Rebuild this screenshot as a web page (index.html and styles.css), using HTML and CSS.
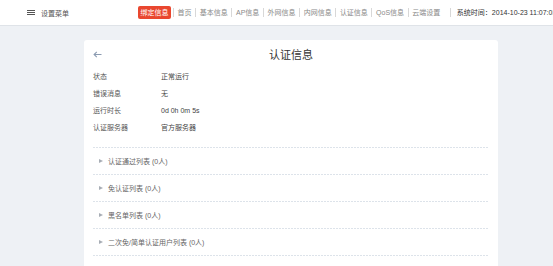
FILE: index.html
```html
<!DOCTYPE html>
<html lang="zh-CN">
<head>
  <meta charset="UTF-8">
  <meta name="viewport" content="width=device-width, initial-scale=1.0">
  <title>认证信息</title>
  <link rel="stylesheet" href="styles.css">
</head>
<body>
  <div class="header">
    <div class="menu-btn">
      <span class="burger"><i></i><i></i><i></i></span>
      <span class="menu-text">设置菜单</span>
    </div>
    <div class="nav">
      <span class="nav-bind">绑定信息</span>
      <span class="nav-item">首页</span>
      <span class="nav-item">基本信息</span>
      <span class="nav-item">AP信息</span>
      <span class="nav-item">外网信息</span>
      <span class="nav-item">内网信息</span>
      <span class="nav-item">认证信息</span>
      <span class="nav-item">QoS信息</span>
      <span class="nav-item">云端设置</span>
      <span class="nav-item sys-time">系统时间：2014-10-23 11:07:03</span>
    </div>
  </div>

  <div class="card">
    <div class="card-head">
      <svg class="back" width="9" height="7" viewBox="0 0 9 7">
        <path d="M8.5 3.5H1.2M3.8 0.8L1.1 3.5l2.7 2.7" fill="none" stroke="#8b9bb1" stroke-width="1.1"/>
      </svg>
      <div class="title">认证信息</div>
    </div>

    <div class="info">
      <div class="row"><span class="label">状态</span><span class="value">正常运行</span></div>
      <div class="row"><span class="label">错误消息</span><span class="value">无</span></div>
      <div class="row"><span class="label">运行时长</span><span class="value">0d 0h 0m 5s</span></div>
      <div class="row"><span class="label">认证服务器</span><span class="value">官方服务器</span></div>
    </div>

    <div class="lists">
      <div class="list-item"><span class="arrow"></span>认证通过列表 (0人)</div>
      <div class="list-item"><span class="arrow"></span>免认证列表 (0人)</div>
      <div class="list-item"><span class="arrow"></span>黑名单列表 (0人)</div>
      <div class="list-item"><span class="arrow"></span>二次免/简单认证用户列表 (0人)</div>
    </div>
  </div>
</body>
</html>
```

FILE: styles.css
```css
body {
  margin: 0;
  background: #eef1f5;
  font-family: "Liberation Sans", "Noto Sans CJK SC", sans-serif;
  font-size: 7px;
  color: #555;
  overflow: hidden;
}
.header {
  height: 25px;
  background: white;
  border-bottom: 1px solid #dfe3e8;
  display: flex;
  align-items: center;
  white-space: nowrap;
  overflow: hidden;
}
.menu-btn {
  display: flex;
  align-items: center;
  margin-left: 27px;
  width: 111px;
  flex-shrink: 0;
}
.burger {
  display: flex;
  flex-direction: column;
  gap: 1.3px;
  margin-right: 6px;
}
.burger i {
  display: block;
  width: 8px;
  height: 1px;
  background: #555;
}
.menu-text {
  color: #555;
}
.nav {
  display: flex;
  align-items: center;
  flex-shrink: 0;
}
.nav > span {
  flex-shrink: 0;
}
.nav-bind {
  background: #e9472f;
  color: white;
  border-radius: 2px;
  padding: 0 2.5px;
  line-height: 13px;
  margin-right: 2px;
}
.nav-item {
  color: #8a8a8a;
  padding: 0 3.6px;
  border-left: 1px solid #d8d8d8;
  line-height: 9px;
}
.sys-time {
  color: #333;
  margin-left: 6px;
  padding-left: 6px;
}
.card {
  margin: 14px 0 0 84px;
  width: 396px;
  padding: 0 9px 20px;
  background: white;
  border-radius: 3px;
}
.card-head {
  position: relative;
  height: 28px;
  display: flex;
  align-items: center;
  justify-content: center;
}
.back {
  position: absolute;
  left: 0;
  top: 11px;
}
.title {
  font-size: 11px;
  color: #333;
}
.row {
  display: flex;
  line-height: 17px;
}
.label {
  width: 68px;
  color: #555;
}
.value {
  color: #444;
}
.lists {
  margin-top: 11px;
}
.list-item {
  height: 27px;
  display: flex;
  align-items: center;
  padding-left: 6px;
  color: #666;
  background-image: linear-gradient(to right, #dde3ea 2px, transparent 2px);
  background-size: 3px 1px;
  background-repeat: repeat-x;
  background-position: 0 0;
}
.list-item:last-child {
  background-image: linear-gradient(to right, #dde3ea 2px, transparent 2px), linear-gradient(to right, #dde3ea 2px, transparent 2px);
  background-size: 3px 1px, 3px 1px;
  background-repeat: repeat-x, repeat-x;
  background-position: 0 0, 0 100%;
  height: 28px;
}
.arrow {
  width: 0;
  height: 0;
  border-left: 4px solid #a7adb5;
  border-top: 2.5px solid transparent;
  border-bottom: 2.5px solid transparent;
  margin-right: 5px;
}
```
